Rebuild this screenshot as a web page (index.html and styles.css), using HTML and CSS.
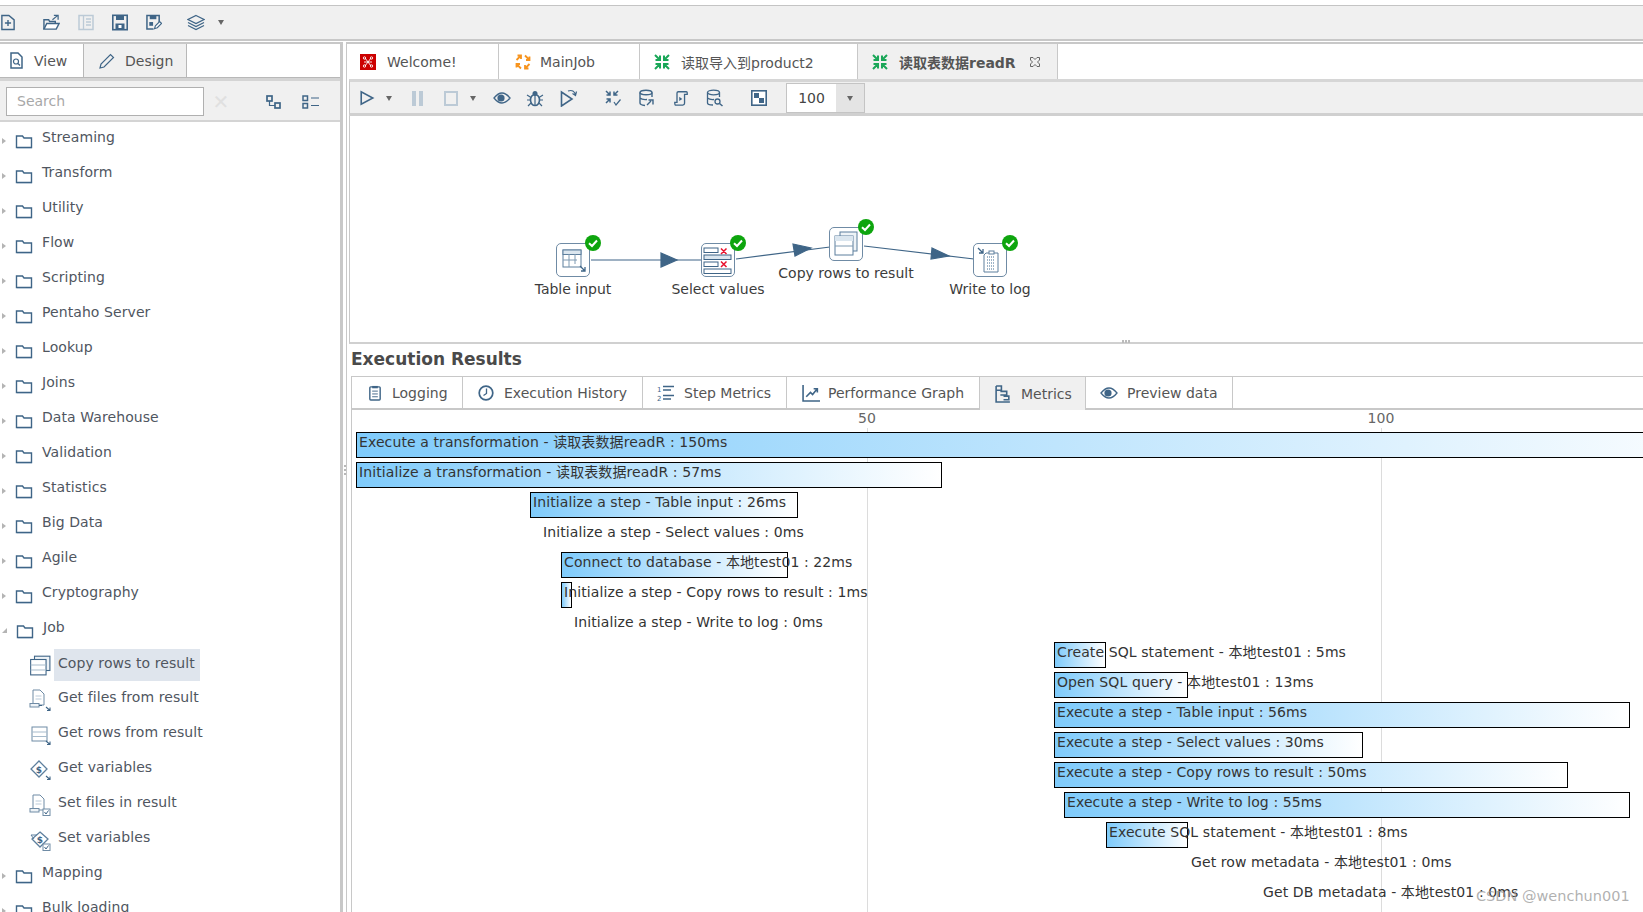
FILE: index.html
```html
<!DOCTYPE html>
<html lang="en">
<head>
<meta charset="utf-8">
<title>Spoon</title>
<link rel="stylesheet" href="styles.css">
</head>
<body>
<svg class="defs" width="0" height="0" aria-hidden="true">
  <defs>
    <symbol id="i-folder" viewBox="0 0 18 16"><path d="M1.5 3V14.5H16.5V5H9L7.5 3Z" fill="#fff" stroke="#3f6587" stroke-width="1.4"/><path d="M2 15.5H17" stroke="#b9c9d8"/></symbol>
    <symbol id="i-new" viewBox="0 0 16 18"><path d="M1 1H9L15 6V17H1Z" fill="none" stroke="#3f6587" stroke-width="1.6"/><path d="M8 6V13M4.5 9.5H11.5" stroke="#3f6587" stroke-width="1.6"/></symbol>
    <symbol id="i-open" viewBox="0 0 18 18"><path d="M1 16V6H6L7 8H13V10" fill="none" stroke="#3f6587" stroke-width="1.5"/><path d="M1 16L4 10H17L14 16Z" fill="#fff" stroke="#3f6587" stroke-width="1.5"/><path d="M10 6L15 2M11.5 1.5H16V6" fill="none" stroke="#3f6587" stroke-width="1.3"/></symbol>
    <symbol id="i-explore" viewBox="0 0 16 16"><rect x="1" y="1" width="14" height="14" fill="none" stroke="#bccad6" stroke-width="1.5"/><path d="M5.5 1V15M8 4.5H13M8 7.5H13M8 10.5H13" stroke="#bccad6" stroke-width="1.3"/></symbol>
    <symbol id="i-save" viewBox="0 0 16 16"><rect x=".8" y=".8" width="14.4" height="14.4" fill="none" stroke="#3f6587" stroke-width="1.6"/><rect x="4" y="1" width="8" height="4.5" fill="#3f6587"/><rect x="3.5" y="9" width="9" height="6" fill="#3f6587"/><rect x="6.5" y="10.5" width="3" height="3" fill="#fff"/></symbol>
    <symbol id="i-saveas" viewBox="0 0 17 17"><path d="M8 15.5H1V1H14V8" fill="none" stroke="#3f6587" stroke-width="1.6"/><rect x="4" y="1" width="7" height="4" fill="#3f6587"/><rect x="3.5" y="8" width="4" height="4" fill="#3f6587"/><path d="M9 15L10 12L14.5 7.5L16.5 9.5L12 14Z" fill="#fff" stroke="#3f6587" stroke-width="1.2"/></symbol>
    <symbol id="i-layers" viewBox="0 0 18 16"><path d="M9 1L17 5L9 9L1 5Z" fill="none" stroke="#3f6587" stroke-width="1.2"/><path d="M1 8L9 12L17 8M1 11L9 15L17 11" fill="none" stroke="#3f6587" stroke-width="1.2"/></symbol>
    <symbol id="i-view" viewBox="0 0 13 17"><path d="M1 1H8L12 5V16H1Z" fill="none" stroke="#3f6587" stroke-width="1.5"/><circle cx="6" cy="9.5" r="2.5" fill="none" stroke="#3f6587" stroke-width="1.2"/><path d="M8 11.5L10 13.5" stroke="#3f6587" stroke-width="1.2"/></symbol>
    <symbol id="i-pencil" viewBox="0 0 16 16"><path d="M1 15L2 11L11.5 1.5L14.5 4.5L5 14Z" fill="none" stroke="#3f6587" stroke-width="1.2"/></symbol>
    <symbol id="i-tree" viewBox="0 0 15 14"><rect x="1" y="1" width="5" height="5" fill="none" stroke="#3f6587" stroke-width="1.7"/><rect x="9" y="8" width="5" height="5" fill="none" stroke="#3f6587" stroke-width="1.7"/><path d="M3.5 6V10.5H9" fill="none" stroke="#3f6587" stroke-width="1.2"/></symbol>
    <symbol id="i-list" viewBox="0 0 17 14"><rect x="1" y="1" width="4.5" height="4.5" fill="none" stroke="#3f6587" stroke-width="1.5"/><rect x="1" y="8.5" width="4.5" height="4.5" fill="none" stroke="#3f6587" stroke-width="1.5"/><path d="M9 3H17M9 10.5H17" stroke="#3f6587" stroke-width="1.2"/></symbol>
    <symbol id="i-copy" viewBox="0 0 20 20"><rect x="5" y="2" width="14" height="13" fill="#eef3f7" stroke="#3f6587"/><rect x="1.5" y="5" width="14" height="14" fill="#fff" stroke="#3f6587"/><path d="M1.5 10H15.5M1.5 14.5H15.5" stroke="#a7bbcc"/></symbol>
    <symbol id="i-getfile" viewBox="0 0 22 22"><path d="M4 1H11L15 5V16H4Z" fill="#fff" stroke="#6f8ba5"/><path d="M6.5 7H12.5M6.5 10H12.5" stroke="#b9cad9"/><rect x="1" y="14.5" width="9" height="3.5" fill="#eef3f7" stroke="#6f8ba5"/><path d="M10 16.5H13M17 18L21 21.5M21 18.5V21.5H18" fill="none" stroke="#3f6587" stroke-width="1.1"/></symbol>
    <symbol id="i-getrows" viewBox="0 0 22 22"><rect x="3" y="3" width="15" height="14" fill="#fff" stroke="#6f8ba5"/><path d="M3 8H18M3 12.5H18" stroke="#a7bbcc"/><path d="M17 17L21 20.5M21 17.5V20.5H18" fill="none" stroke="#3f6587" stroke-width="1.1"/></symbol>
    <symbol id="i-getvar" viewBox="0 0 22 22"><path d="M10 2L18 10L10 18L2 10Z" fill="#fff" stroke="#5d7f9d" stroke-width="1.3"/><text x="10" y="13.5" class="dollar" text-anchor="middle">$</text><path d="M17 17L21 20.5M21 17.5V20.5H18" fill="none" stroke="#3f6587" stroke-width="1.1"/></symbol>
    <symbol id="i-setfile" viewBox="0 0 22 22"><path d="M4 1H11L15 5V16H4Z" fill="#fff" stroke="#6f8ba5"/><path d="M6.5 7H12.5M6.5 10H12.5" stroke="#b9cad9"/><rect x="1" y="14.5" width="9" height="3.5" fill="#eef3f7" stroke="#6f8ba5"/><rect x="14" y="15" width="7" height="6.5" fill="#fff" stroke="#6f8ba5"/><path d="M15.5 18L17 20L19.5 16.5" fill="none" stroke="#3f6587"/></symbol>
    <symbol id="i-setvar" viewBox="0 0 22 22"><path d="M11 3L19 10L11 18L3 10Z" fill="#fff" stroke="#5d7f9d" stroke-width="1.3"/><path d="M2 6H8M2 6L5 10" fill="none" stroke="#5d7f9d"/><text x="11" y="13.5" class="dollar" text-anchor="middle">$</text><rect x="14" y="15" width="7" height="6.5" fill="#fff" stroke="#6f8ba5"/><path d="M15.5 18L17 20L19.5 16.5" fill="none" stroke="#3f6587"/></symbol>
    <symbol id="i-spoon" viewBox="0 0 16 16"><rect width="16" height="16" fill="#cc0000"/><g fill="none" stroke="#fff" stroke-width=".9"><path d="M5 4L11 12M11 4L5 12M4 8H12"/><circle cx="4.5" cy="4" r="1.2"/><circle cx="11.5" cy="4" r="1.2"/><circle cx="4.5" cy="12" r="1.2"/><circle cx="11.5" cy="12" r="1.2"/></g></symbol>
    <symbol id="i-job" viewBox="0 0 18 18"><path d="M2.5 7L7 2.5M3.5 2.5H7V6M11 2.500L15.500 7M15.500 3.500V7H12M15.500 11L11 15.500M14.500 15.500H11V12M7 15.500L2.500 11M2.500 14.500V11H6" fill="none" stroke="#f7941e" stroke-width="1.8"/></symbol>
    <symbol id="i-trans" viewBox="0 0 18 18"><path d="M2 2L7 7M7 2.5V7H2.5M16 2L11 7M11 2.5V7H15.5M2 16L7 11M2.5 11H7V15.5M16 16L11 11M15.5 11H11V15.5" fill="none" stroke="#1aa758" stroke-width="2"/></symbol>
    <symbol id="i-close" viewBox="0 0 12 12"><path d="M1.5 1.5H4L6 3.5L8 1.5H10.5V4L8.5 6L10.5 8V10.5H8L6 8.5L4 10.5H1.5V8L3.5 6L1.5 4Z" fill="none" stroke="#666"/></symbol>
    <symbol id="i-play" viewBox="0 0 16 18"><path d="M1.5 2V16L14.5 9Z" fill="none" stroke="#3f6587" stroke-width="1.8"/></symbol>
    <symbol id="i-eye" viewBox="0 0 18 14"><path d="M1 7Q9 -3 17 7Q9 17 1 7Z" fill="none" stroke="#3f6587" stroke-width="1.3"/><circle cx="8" cy="7" r="3.6" fill="#3f6587"/></symbol>
    <symbol id="i-bug" viewBox="0 0 18 18"><ellipse cx="9" cy="11" rx="4.5" ry="5.5" fill="none" stroke="#3f6587" stroke-width="1.6"/><circle cx="9" cy="4.5" r="2.5" fill="#3f6587"/><path d="M1 6L5 8.5M17 6L13 8.5M1 11H4.5M17 11H13.5M2 17L5 14M16 17L13 14M9 6V16" stroke="#3f6587" stroke-width="1.2"/></symbol>
    <symbol id="i-replay" viewBox="0 0 18 18"><path d="M1.5 3V17L12 10Z" fill="none" stroke="#3f6587" stroke-width="1.6"/><path d="M8 2Q14 0 15.5 6M16.5 2.5L15.5 6.5L12.5 4.5" fill="none" stroke="#3f6587" stroke-width="1.2"/></symbol>
    <symbol id="i-verify" viewBox="0 0 18 18"><path d="M2 2L6 6M6 2.5V6H2.5M14 2L10 6M10 2.5V6H13.5M2 14L6 10M2.5 10H6V13.5" fill="none" stroke="#3f6587" stroke-width="1.5"/><path d="M10 13L12 16L16.5 10.5" fill="none" stroke="#3f6587" stroke-width="1.2"/></symbol>
    <symbol id="i-impact" viewBox="0 0 18 18"><ellipse cx="8" cy="3.5" rx="6" ry="2.3" fill="none" stroke="#3f6587" stroke-width="1.4"/><path d="M2 3.5V14Q2 16 7 16.5M14 3.5V8M2 9Q4 11 9 10.5" fill="none" stroke="#3f6587" stroke-width="1.4"/><path d="M9 16L13 12M10.5 11H15V15.5" fill="none" stroke="#3f6587" stroke-width="1.4"/></symbol>
    <symbol id="i-sql" viewBox="0 0 16 18"><path d="M5 2H14Q15 2 15 3V5H12V15Q12 17 10 17H2Q1 17 1 14H3.5V3.500Q3.500 2 5 2Z" fill="none" stroke="#3f6587" stroke-width="1.5"/><path d="M6 7.5L9.5 10L6 12.5Z" fill="#3f6587"/></symbol>
    <symbol id="i-dbsearch" viewBox="0 0 18 18"><ellipse cx="7.5" cy="3.5" rx="6" ry="2.3" fill="none" stroke="#3f6587" stroke-width="1.3"/><path d="M1.5 3.5V14Q1.5 16 7 16M13.5 3.5V8M1.5 9Q4 11 8 10.5" fill="none" stroke="#3f6587" stroke-width="1.3"/><circle cx="11.5" cy="12.5" r="2.5" fill="none" stroke="#3f6587" stroke-width="1.3"/><path d="M13.5 14.5L16.5 17" stroke="#3f6587" stroke-width="1.5"/></symbol>
    <symbol id="i-zoom" viewBox="0 0 16 16"><rect x=".8" y=".8" width="14.4" height="14.4" fill="#fff" stroke="#3f6587" stroke-width="1.6"/><rect x="3" y="3" width="5" height="5" fill="#3f6587"/><rect x="8" y="8" width="5" height="5" fill="#3f6587"/></symbol>
    <symbol id="i-log" viewBox="0 0 13 17"><rect x="1" y="2" width="11" height="14" rx="1" fill="none" stroke="#3f6587" stroke-width="1.5"/><rect x="3.5" y="1" width="6" height="2.5" fill="#3f6587"/><path d="M3.5 6.5H9.5M3.5 9.5H9.5M3.5 12.5H9.5" stroke="#3f6587"/></symbol>
    <symbol id="i-clock" viewBox="0 0 16 16"><circle cx="8" cy="8" r="6.8" fill="none" stroke="#3f6587" stroke-width="1.7"/><path d="M8.5 3.5V8.5L5.5 10.5" fill="none" stroke="#3f6587" stroke-width="1.3"/></symbol>
    <symbol id="i-steps" viewBox="0 0 18 17"><text x="0" y="7" class="mini">1</text><text x="0" y="16" class="mini">2</text><path d="M6 2H17M6 5.5H14M6 11H17M6 14.5H14" stroke="#3f6587" stroke-width="1.3"/></symbol>
    <symbol id="i-perf" viewBox="0 0 17 17"><path d="M1 1V16H17" fill="none" stroke="#3f6587" stroke-width="1.5"/><path d="M4 12L8 8L10 10L14 5M11 4.5H14.5V8" fill="none" stroke="#3f6587" stroke-width="1.5"/></symbol>
    <symbol id="i-metrics" viewBox="0 0 15 17"><path d="M1 1V16H14M1 1H6V5H1M5 6H11V9.5H5M8 10.5H13V14H8" fill="none" stroke="#3f6587" stroke-width="1.5"/></symbol>
    <symbol id="n-table" viewBox="0 0 34 34"><rect x="7" y="7" width="18" height="17" fill="#fff" stroke="#5d7f9d"/><rect x="7" y="7" width="18" height="4.5" fill="#dbe6ef" stroke="#5d7f9d"/><path d="M7 17H21M13 11V24M19 11V21" stroke="#7f9ab2"/><path d="M24 23L29 28M29 24V28H25" fill="none" stroke="#3f6587" stroke-width="1.3"/></symbol>
    <symbol id="n-select" viewBox="0 0 34 34"><g fill="#fff" stroke="#3f6587"><rect x="3" y="5" width="14" height="4.5"/><rect x="3" y="12" width="27" height="4.5" fill="#dbe6ef"/><rect x="3" y="19" width="14" height="4.5"/><rect x="3" y="26" width="27" height="4.5"/></g><path d="M20 5.5L25.5 11M25.5 5.5L20 11M20 18.5L25.5 24M25.5 18.5L20 24" stroke="#e8112d" stroke-width="1.5"/></symbol>
    <symbol id="n-copy" viewBox="0 0 34 34"><rect x="11" y="5" width="17" height="19" fill="#eef3f7" stroke="#5d7f9d"/><rect x="6" y="9" width="18" height="19" fill="#fff" stroke="#5d7f9d"/><rect x="6" y="9" width="18" height="5" fill="#dbe6ef"/><path d="M6 19H24" stroke="#7f9ab2"/></symbol>
    <symbol id="n-log" viewBox="0 0 34 34"><path d="M13 10H25V29H11V12Z" fill="#fff" stroke="#5d7f9d"/><path d="M14 14H22M14 17H22M14 20H22M14 23H22M14 26H22" stroke="#9db4c8" stroke-width="1.8" stroke-dasharray="1 1"/><rect x="16" y="8" width="5" height="3" fill="#fff" stroke="#5d7f9d"/><path d="M5 5L10 10M10 6V10H6" fill="none" stroke="#3f6587" stroke-width="1.3"/></symbol>
    <symbol id="n-ok" viewBox="0 0 16 16"><circle cx="8" cy="8" r="8" fill="#0ea50e"/><path d="M4 8.2L7 11L12 5.5" fill="none" stroke="#fff" stroke-width="2"/></symbol>
  </defs>
</svg>

<div class="app">
  <div class="topgap"></div>
  <header class="toolbar">
    <svg class="ic t-new"><use href="#i-new"/></svg>
    <svg class="ic t-open"><use href="#i-open"/></svg>
    <svg class="ic t-std"><use href="#i-explore"/></svg>
    <svg class="ic t-std"><use href="#i-save"/></svg>
    <svg class="ic t-std"><use href="#i-saveas"/></svg>
    <svg class="ic t-layers"><use href="#i-layers"/></svg>
    <span class="caret t-caret"></span>
  </header>

  <div class="workspace">
    <aside class="side">
      <div class="side-tabs">
        <div class="side-tab view"><svg class="ic s13"><use href="#i-view"/></svg>View</div>
        <div class="side-tab design"><svg class="ic s16"><use href="#i-pencil"/></svg>Design</div>
      </div>
      <div class="search-bar">
        <div class="search">Search</div>
        <span class="clear">✕</span>
        <svg class="ic tree-i"><use href="#i-tree"/></svg>
        <svg class="ic list-i"><use href="#i-list"/></svg>
      </div>
      <ul class="tree">
        <li class="cat"><span class="tw"></span><svg class="ic folder"><use href="#i-folder"/></svg><span class="lbl">Streaming</span></li>
        <li class="cat"><span class="tw"></span><svg class="ic folder"><use href="#i-folder"/></svg><span class="lbl">Transform</span></li>
        <li class="cat"><span class="tw"></span><svg class="ic folder"><use href="#i-folder"/></svg><span class="lbl">Utility</span></li>
        <li class="cat"><span class="tw"></span><svg class="ic folder"><use href="#i-folder"/></svg><span class="lbl">Flow</span></li>
        <li class="cat"><span class="tw"></span><svg class="ic folder"><use href="#i-folder"/></svg><span class="lbl">Scripting</span></li>
        <li class="cat"><span class="tw"></span><svg class="ic folder"><use href="#i-folder"/></svg><span class="lbl">Pentaho Server</span></li>
        <li class="cat"><span class="tw"></span><svg class="ic folder"><use href="#i-folder"/></svg><span class="lbl">Lookup</span></li>
        <li class="cat"><span class="tw"></span><svg class="ic folder"><use href="#i-folder"/></svg><span class="lbl">Joins</span></li>
        <li class="cat"><span class="tw"></span><svg class="ic folder"><use href="#i-folder"/></svg><span class="lbl">Data Warehouse</span></li>
        <li class="cat"><span class="tw"></span><svg class="ic folder"><use href="#i-folder"/></svg><span class="lbl">Validation</span></li>
        <li class="cat"><span class="tw"></span><svg class="ic folder"><use href="#i-folder"/></svg><span class="lbl">Statistics</span></li>
        <li class="cat"><span class="tw"></span><svg class="ic folder"><use href="#i-folder"/></svg><span class="lbl">Big Data</span></li>
        <li class="cat"><span class="tw"></span><svg class="ic folder"><use href="#i-folder"/></svg><span class="lbl">Agile</span></li>
        <li class="cat"><span class="tw"></span><svg class="ic folder"><use href="#i-folder"/></svg><span class="lbl">Cryptography</span></li>
        <li class="cat"><span class="tw open"></span><svg class="ic folder"><use href="#i-folder"/></svg><span class="lbl">Job</span></li>
        <li class="leaf"><svg class="ic leaf-i"><use href="#i-copy"/></svg><span class="lbl sel">Copy rows to result</span></li>
        <li class="leaf"><svg class="ic leaf-i"><use href="#i-getfile"/></svg><span class="lbl">Get files from result</span></li>
        <li class="leaf"><svg class="ic leaf-i"><use href="#i-getrows"/></svg><span class="lbl">Get rows from result</span></li>
        <li class="leaf"><svg class="ic leaf-i"><use href="#i-getvar"/></svg><span class="lbl">Get variables</span></li>
        <li class="leaf"><svg class="ic leaf-i"><use href="#i-setfile"/></svg><span class="lbl">Set files in result</span></li>
        <li class="leaf"><svg class="ic leaf-i"><use href="#i-setvar"/></svg><span class="lbl">Set variables</span></li>
        <li class="cat"><span class="tw"></span><svg class="ic folder"><use href="#i-folder"/></svg><span class="lbl">Mapping</span></li>
        <li class="cat"><span class="tw"></span><svg class="ic folder"><use href="#i-folder"/></svg><span class="lbl">Bulk loading</span></li>
      </ul>
    </aside>

    <div class="sash"><i></i><i></i><i></i></div>

    <main class="main">
      <nav class="doc-tabs">
        <div class="doc-tab w1"><svg class="ic s16"><use href="#i-spoon"/></svg>Welcome!</div>
        <div class="doc-tab w2"><svg class="ic s18"><use href="#i-job"/></svg>MainJob</div>
        <div class="doc-tab w3"><svg class="ic s18"><use href="#i-trans"/></svg>读取导入到product2</div>
        <div class="doc-tab w4 active"><svg class="ic s18"><use href="#i-trans"/></svg>读取表数据readR<svg class="ic tab-x"><use href="#i-close"/></svg></div>
      </nav>

      <div class="run-bar">
        <div class="tb"><svg class="ic s16"><use href="#i-play"/></svg></div>
        <span class="tb-caret"><span class="caret"></span></span>
        <div class="tb g6"><span class="pause"></span></div>
        <div class="tb g2"><span class="stop"></span></div>
        <span class="tb-caret"><span class="caret"></span></span>
        <div class="tb g7"><svg class="ic s18"><use href="#i-eye"/></svg></div>
        <div class="tb g1"><svg class="ic s18"><use href="#i-bug"/></svg></div>
        <div class="tb g2"><svg class="ic s18"><use href="#i-replay"/></svg></div>
        <div class="tb g12"><svg class="ic s18"><use href="#i-verify"/></svg></div>
        <div class="tb g2"><svg class="ic s18"><use href="#i-impact"/></svg></div>
        <div class="tb g2"><svg class="ic s16"><use href="#i-sql"/></svg></div>
        <div class="tb g2"><svg class="ic s18"><use href="#i-dbsearch"/></svg></div>
        <div class="tb g12"><svg class="ic s16"><use href="#i-zoom"/></svg></div>
        <div class="combo"><span class="combo-v">100</span><span class="combo-b"><span class="caret"></span></span></div>
      </div>

      <section class="canvas">
        <svg class="edges" width="1296" height="228">
          <g stroke="#3f6587" stroke-width="1.2" fill="#3f6587">
            <line x1="243" y1="144" x2="355" y2="144"/>
            <path d="M313 137L329 144L313 151Z"/>
            <line x1="388" y1="143" x2="482" y2="131"/>
            <path d="M445 128L463 132L447 140Z"/>
            <line x1="516" y1="130" x2="626" y2="143"/>
            <path d="M584 132L601 140L583 143Z"/>
          </g>
        </svg>
        <div class="node n1"><div class="nbox"><svg class="nicon"><use href="#n-table"/></svg><svg class="nok"><use href="#n-ok"/></svg></div><span class="nlabel">Table input</span></div>
        <div class="node n2"><div class="nbox"><svg class="nicon"><use href="#n-select"/></svg><svg class="nok"><use href="#n-ok"/></svg></div><span class="nlabel">Select values</span></div>
        <div class="node n3"><div class="nbox"><svg class="nicon"><use href="#n-copy"/></svg><svg class="nok"><use href="#n-ok"/></svg></div><span class="nlabel">Copy rows to result</span></div>
        <div class="node n4"><div class="nbox"><svg class="nicon"><use href="#n-log"/></svg><svg class="nok"><use href="#n-ok"/></svg></div><span class="nlabel">Write to log</span></div>
        <div class="grip"><i></i><i></i><i></i></div>
      </section>

      <section class="results">
        <h2 class="res-title">Execution Results</h2>
        <div class="res-tabs">
          <div class="res-tab r1"><svg class="ic s16"><use href="#i-log"/></svg>Logging</div>
          <div class="res-tab r2"><svg class="ic s16"><use href="#i-clock"/></svg>Execution History</div>
          <div class="res-tab r3"><svg class="ic s18"><use href="#i-steps"/></svg>Step Metrics</div>
          <div class="res-tab r4"><svg class="ic s18"><use href="#i-perf"/></svg>Performance Graph</div>
          <div class="res-tab r5 active"><svg class="ic s18"><use href="#i-metrics"/></svg>Metrics</div>
          <div class="res-tab r6"><svg class="ic s18"><use href="#i-eye"/></svg>Preview data</div>
        </div>
        <div class="gantt">
          <div class="scale"><span class="tick t50">50</span><span class="tick t100">100</span></div>
          <span class="grid g50"></span><span class="grid g100"></span>
          <div class="row"><div class="bar" style="margin-left:4px;width:1400px">Execute a transformation - 读取表数据readR : 150ms</div></div>
          <div class="row"><div class="bar" style="margin-left:4px;width:586px">Initialize a transformation - 读取表数据readR : 57ms</div></div>
          <div class="row"><div class="bar" style="margin-left:178px;width:268px">Initialize a step - Table input : 26ms</div></div>
          <div class="row"><div class="txt" style="margin-left:191px">Initialize a step - Select values : 0ms</div></div>
          <div class="row"><div class="bar" style="margin-left:209px;width:227px">Connect to database - 本地test01 : 22ms</div></div>
          <div class="row"><div class="bar" style="margin-left:209px;width:11px">Initialize a step - Copy rows to result : 1ms</div></div>
          <div class="row"><div class="txt" style="margin-left:222px">Initialize a step - Write to log : 0ms</div></div>
          <div class="row"><div class="bar" style="margin-left:702px;width:52px">Create SQL statement - 本地test01 : 5ms</div></div>
          <div class="row"><div class="bar" style="margin-left:702px;width:134px">Open SQL query - 本地test01 : 13ms</div></div>
          <div class="row"><div class="bar" style="margin-left:702px;width:576px">Execute a step - Table input : 56ms</div></div>
          <div class="row"><div class="bar" style="margin-left:702px;width:309px">Execute a step - Select values : 30ms</div></div>
          <div class="row"><div class="bar" style="margin-left:702px;width:514px">Execute a step - Copy rows to result : 50ms</div></div>
          <div class="row"><div class="bar" style="margin-left:712px;width:566px">Execute a step - Write to log : 55ms</div></div>
          <div class="row"><div class="bar" style="margin-left:754px;width:82px">Execute SQL statement - 本地test01 : 8ms</div></div>
          <div class="row"><div class="txt" style="margin-left:839px">Get row metadata - 本地test01 : 0ms</div></div>
          <div class="row"><div class="txt" style="margin-left:911px">Get DB metadata - 本地test01 : 0ms</div></div>
        </div>
      </section>
    </main>
  </div>
  <div class="watermark">CSDN @wenchun001</div>
</div>
</body>
</html>
```
FILE: styles.css
```css
* { box-sizing: border-box; }
html, body { margin: 0; padding: 0; background: #fff; overflow: hidden; }
body { font-family: "DejaVu Sans", "Noto Sans CJK SC", sans-serif; font-size: 14px; color: #4c4c4c; }
.defs { position: absolute; }
.dollar { font: bold 9px "DejaVu Sans", sans-serif; fill: #3f6587; }
.mini { font: 7px "DejaVu Sans", sans-serif; fill: #3f6587; }
.app { position: relative; width: 1643px; height: 912px; overflow: hidden; display: flex; flex-direction: column; }
.ic { display: block; flex: none; }
.s13 { width: 13px; height: 17px; }
.s16 { width: 16px; height: 16px; }
.s18 { width: 18px; height: 18px; }

.topgap { height: 5px; flex: none; background: #fff; }
.toolbar { height: 36px; flex: none; background: #f0f0f0; border-top: 1px solid #c4c4c4; border-bottom: 2px solid #c8c8c8; display: flex; align-items: center; }
.toolbar .ic { height: 17px; }
.t-new { width: 14px; margin-left: 1px; }
.t-open { width: 17px; margin-left: 28px; }
.t-std { width: 16px; margin-left: 18px; }
.t-layers { width: 18px; margin-left: 25px; }
.caret { display: block; width: 0; height: 0; border-left: 3.5px solid transparent; border-right: 3.5px solid transparent; border-top: 5px solid #666; }
.t-caret { margin-left: 13px; }

.workspace { flex: 1; min-height: 0; display: flex; padding-top: 1px; }
.side { width: 343px; flex: none; border-top: 2px solid #c8c8c8; border-right: 3px solid #c8c8c8; display: flex; flex-direction: column; overflow: hidden; }
.side-tabs { height: 34px; flex: none; display: flex; border-bottom: 1px solid #b8b8b8; }
.side-tab { display: flex; align-items: center; border-right: 1px solid #b8b8b8; font-size: 14px; color: #555; }
.side-tab.view { width: 84px; padding-left: 10px; gap: 11px; }
.side-tab.design { width: 103px; padding-left: 15px; gap: 10px; background: #f0f0f0; }
.search-bar { height: 44px; flex: none; background: #f0f0f0; border-top: 3px solid #d4d4d4; border-bottom: 2px solid #d4d4d4; display: flex; align-items: center; padding: 2px 0 0 6px; }
.search { width: 198px; height: 29px; border: 1px solid #b0b0b0; background: #fff; color: #a8a8a8; padding-left: 10px; line-height: 27px; }
.clear { width: 22px; margin-left: 6px; color: #e0e0e0; font-size: 20px; line-height: 20px; text-align: center; }
.tree-i { width: 15px; height: 14px; margin-left: 34px; }
.list-i { width: 17px; height: 14px; margin-left: 21px; }

.tree { list-style: none; margin: 0; padding: 0; letter-spacing: .08px; }
.cat, .leaf { height: 35px; display: flex; align-items: center; }
.tw { width: 0; height: 0; margin-left: 2px; border-top: 3.5px solid transparent; border-bottom: 3.5px solid transparent; border-left: 4.5px solid #b4b4b4; position: relative; top: 1px; }
.tw.open { border-top: 0; border-bottom: 5px solid #b4b4b4; border-left: 5px solid transparent; margin-left: 2px; }
.folder { width: 18px; height: 16px; margin-left: 8.5px; position: relative; top: 1px; }
.lbl { margin-left: 9.5px; position: relative; top: -3px; color: #50565f; }
.leaf-i { width: 22px; height: 22px; margin-left: 29px; }
.leaf .lbl { margin-left: 7px; padding: 0; }
.leaf .lbl.sel { background: #dfe5ed; margin-left: 3px; padding: 6px 5px 10px 4px; top: 0; }

.sash { width: 3px; flex: none; display: flex; flex-direction: column; justify-content: center; gap: 2px; padding-left: .5px; padding-bottom: 14px; }
.sash i { display: block; width: 2px; height: 2px; background: #b8b8b8; }

.main { flex: 1; min-width: 0; display: flex; flex-direction: column; overflow: hidden; border-left: 1px solid #c8c8c8; border-top: 2px solid #c8c8c8; }
.doc-tabs { height: 35px; flex: none; display: flex; }
.doc-tab { display: flex; align-items: center; border-right: 1px solid #c8c8c8; color: #555; padding-top: 1px; }
.w1 { width: 152px; padding-left: 13px; gap: 11px; }
.w2 { width: 141px; padding-left: 15px; gap: 8px; }
.w3 { width: 218px; padding-left: 13px; gap: 10px; }
.w4 { width: 200px; padding-left: 13px; gap: 10px; background: #f0f0f0; font-weight: bold; }
.tab-x { width: 12px; height: 12px; margin-left: 3px; }

.run-bar { height: 37px; flex: none; margin-left: 2px; background: #f0f0f0; border-top: 3px solid #d6d6d6; border-bottom: 3px solid #d0d0d0; border-left: 1px solid #c8c8c8; display: flex; align-items: center; padding: 1px 0 0 1px; }
.tb { width: 32px; display: flex; align-items: center; justify-content: center; flex: none; }
.tb-caret { width: 12px; display: flex; justify-content: center; flex: none; }
.g7 { margin-left: 7px; }
.g6 { margin-left: 6px; }
.g2 { margin-left: 2px; }
.g1 { margin-left: 1px; }
.g12 { margin-left: 12px; }
.pause { width: 11px; height: 15px; border-left: 4px solid #bccad6; border-right: 4px solid #bccad6; }
.stop { width: 14px; height: 15px; border: 2px solid #bccad6; }
.combo { width: 79px; height: 30px; margin-left: 11px; display: flex; border: 1px solid #c4c4c4; background: #e4e4e4; flex: none; }
.combo-v { width: 49px; background: #fff; text-align: center; line-height: 28px; color: #444; }
.combo-b { flex: 1; display: flex; align-items: center; justify-content: center; }

.canvas { position: relative; height: 228px; flex: none; margin-left: 2px; border-left: 1px solid #c8c8c8; border-bottom: 2px solid #d0d0d0; }
.edges { position: absolute; left: -2px; top: 0; }
.node { position: absolute; width: 160px; display: flex; flex-direction: column; align-items: center; }
.n1 { left: 143px; top: 127px; }
.n2 { left: 288px; top: 127px; }
.n3 { left: 416px; top: 111px; }
.n4 { left: 560px; top: 127px; }
.nbox { position: relative; width: 34px; height: 34px; border: 1px solid #6f8ba5; border-radius: 5px; background: #fff; }
.nicon { position: absolute; left: -1px; top: -1px; width: 34px; height: 34px; }
.nok { position: absolute; left: 28px; top: -9px; width: 16px; height: 16px; }
.nlabel { margin-top: 2px; color: #3c3c3c; line-height: 20px; }
.grip { position: absolute; left: 772px; bottom: -1px; display: flex; gap: 1px; }
.grip i { display: block; width: 2px; height: 3px; background: #bbb; }

.results { flex: 1; min-height: 0; display: flex; flex-direction: column; padding-left: 4px; }
.res-title { margin: 0; height: 32px; font-size: 17px; font-weight: bold; color: #4a4a4a; line-height: 30px; }
.res-tabs { height: 34px; flex: none; display: flex; border: 1px solid #c8c8c8; border-width: 1px 0 2px 1px; }
.res-tab { display: flex; align-items: center; border-right: 1px solid #c8c8c8; color: #555; }
.r1 { width: 111px; padding-left: 15px; gap: 9px; }
.r2 { width: 180px; padding-left: 15px; gap: 10px; }
.r3 { width: 144px; padding-left: 14px; gap: 9px; }
.r4 { width: 193px; padding-left: 15px; gap: 8px; }
.r5 { width: 106px; padding-left: 14px; gap: 9px; background: #f0f0f0; margin-bottom: -2px; }
.r6 { width: 147px; padding-left: 14px; gap: 9px; }

.gantt { position: relative; flex: 1; min-height: 0; border-left: 1px solid #c8c8c8; overflow: hidden; padding-top: 22px; letter-spacing: .1px; }
.scale { position: absolute; left: 0; top: 0; width: 100%; height: 20px; color: #666; }
.tick { position: absolute; top: -1px; transform: translateX(-50%); line-height: 18px; }
.t50 { left: 515px; }
.t100 { left: 1029px; }
.grid { position: absolute; top: 18px; bottom: 0; width: 1px; background: #dcdcdc; }
.g50 { left: 515px; }
.g100 { left: 1029px; }
.row { position: relative; height: 30px; white-space: nowrap; }
.bar { height: 26px; border: 1px solid #000; padding-left: 2px; line-height: 18px; color: #333; background: linear-gradient(to right, #7fcbfb, #fff); }
.txt { height: 26px; line-height: 20px; color: #333; }

.watermark { position: absolute; left: 1476px; top: 888px; font-size: 14.5px; color: rgba(150,150,150,.75); white-space: nowrap; }
```
